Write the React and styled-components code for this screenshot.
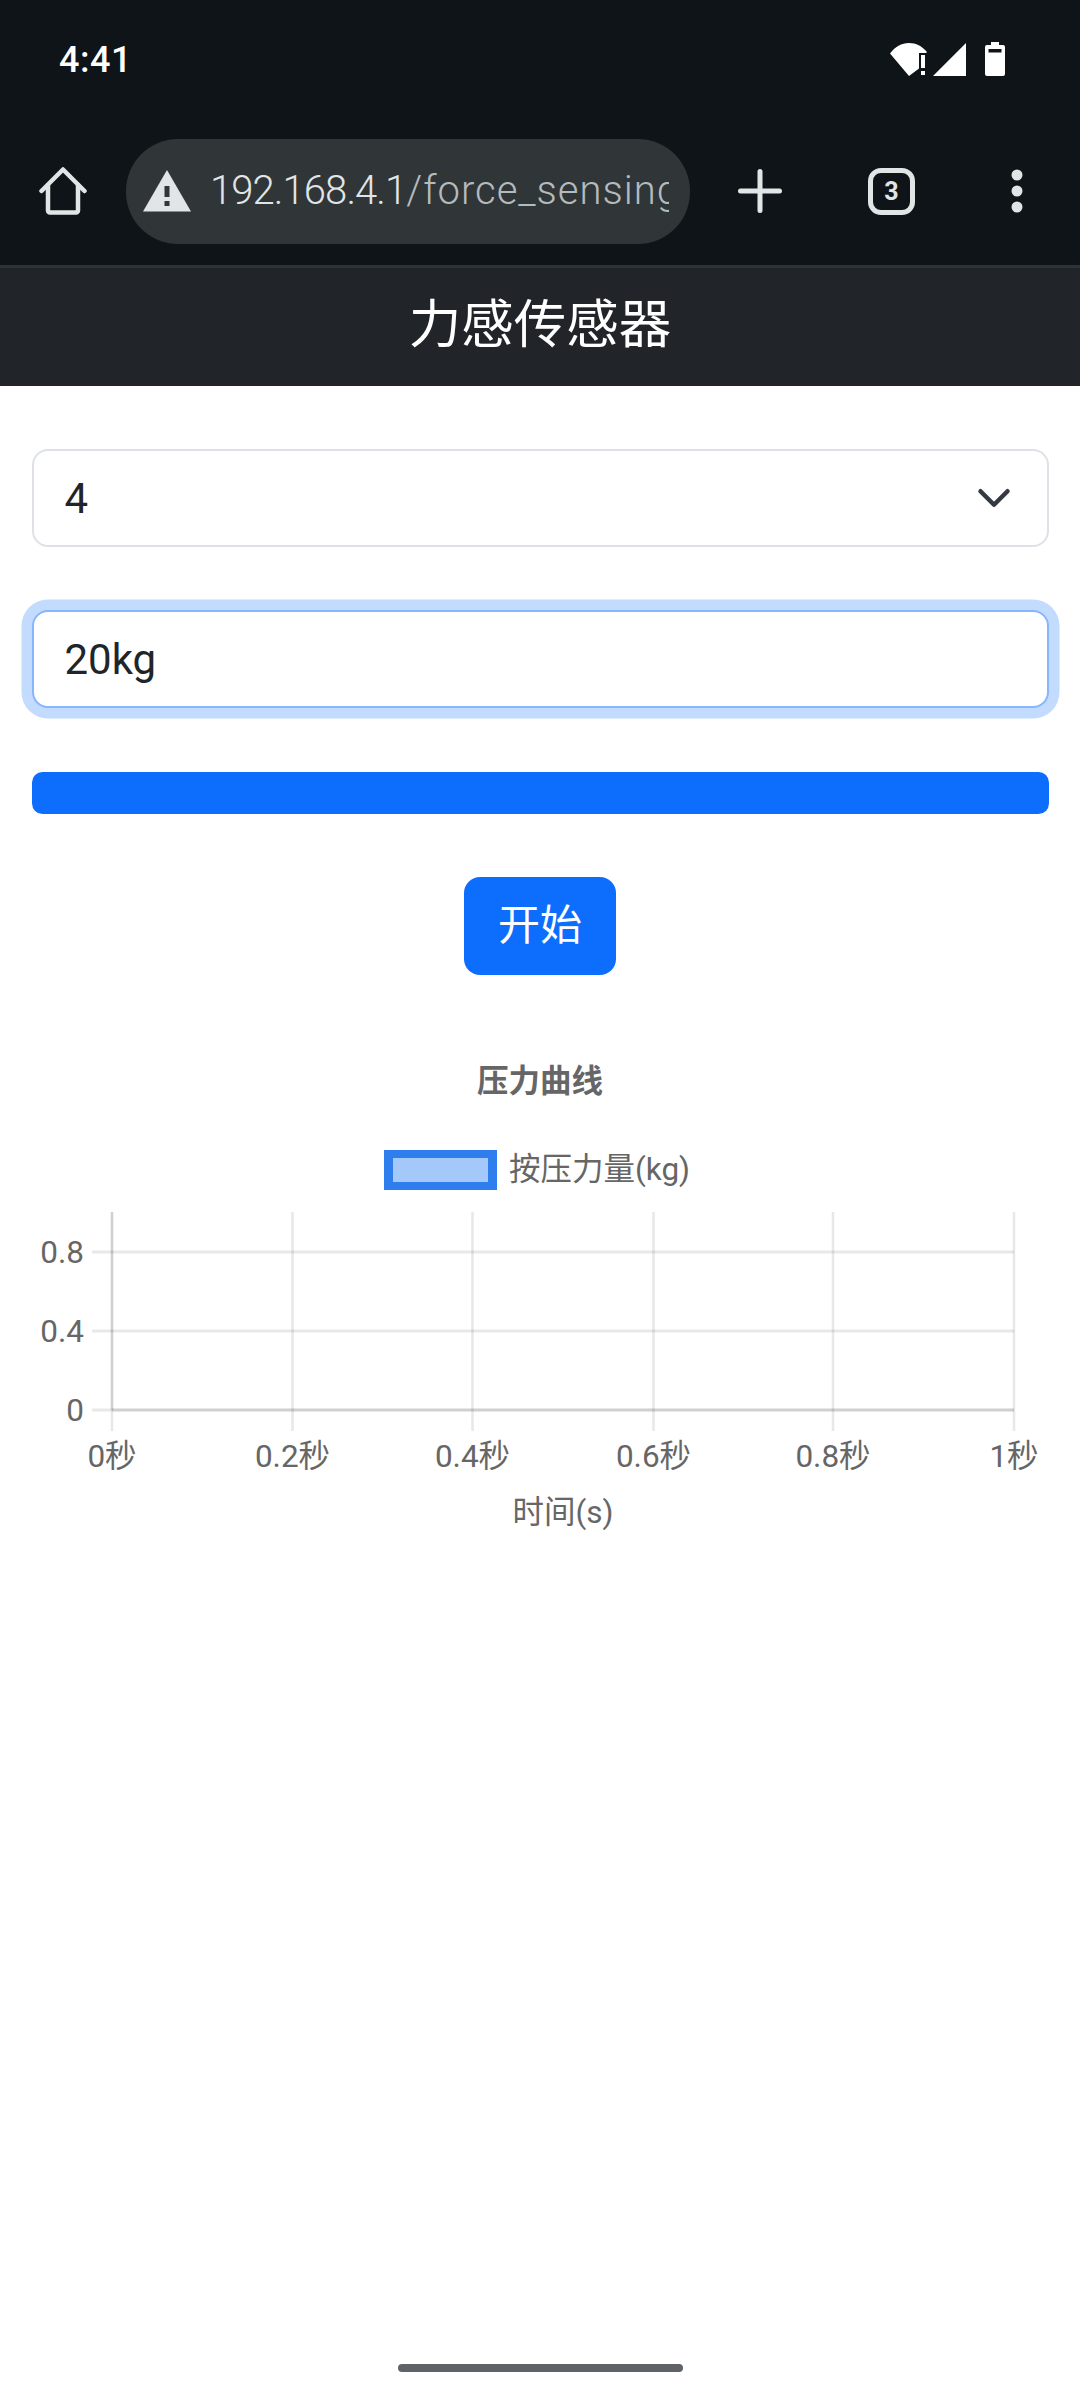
import React from "react";
import styled, { createGlobalStyle } from "styled-components";

const GlobalStyle = createGlobalStyle`
  html, body {
    margin: 0;
    padding: 0;
    background: #fff;
  }
  * {
    box-sizing: border-box;
  }
`;

const fontStack = `Roboto, "Noto Sans CJK SC", sans-serif`;

const Page = styled.div`
  width: 1080px;
  height: 2400px;
  display: flex;
  flex-direction: column;
  font-family: ${fontStack};
  overflow: hidden;
`;

const StatusBar = styled.div`
  height: 139px;
  padding: 0 75px 59px 59px;
  background: #0e1417;
  display: flex;
  align-items: flex-end;
  justify-content: space-between;
`;

const Time = styled.span`
  color: #fff;
  font-size: 36px;
  font-weight: 500;
  line-height: 40px;
  letter-spacing: 0.5px;
`;

const StatusIcons = styled.div`
  margin-bottom: 3px;
  display: flex;
  align-items: center;
  gap: 5px;
  height: 36px;
`;

const Toolbar = styled.div`
  height: 126px;
  padding-bottom: 22px;
  background: #0e1417;
  display: flex;
  align-items: center;
`;

const HomeSlot = styled.div`
  width: 126px;
  display: flex;
  justify-content: center;
`;

const UrlPill = styled.div`
  width: 564px;
  height: 105px;
  padding: 0 21px 0 17px;
  border-radius: 52px;
  background: #303538;
  display: flex;
  align-items: center;
  gap: 19px;
  overflow: hidden;
`;

const UrlText = styled.div`
  flex: 1;
  padding-bottom: 2px;
  overflow: hidden;
  white-space: nowrap;
  font-size: 40px;
  font-weight: 300;
  letter-spacing: 1px;
  color: #b4bbbd;
`;

const UrlHost = styled.span`
  color: #e1e5e6;
  letter-spacing: -0.9px;
`;

const ToolActions = styled.div`
  flex: 1;
  padding: 0 57px 0 48px;
  display: flex;
  align-items: center;
  justify-content: space-between;
`;

const TabCount = styled.div`
  width: 47px;
  height: 47px;
  margin-right: 10px;
  border: 5px solid #e1e5e6;
  border-radius: 13px;
  color: #e1e5e6;
  font-size: 25px;
  font-weight: 700;
  display: flex;
  align-items: center;
  justify-content: center;
`;

const NavBar = styled.header`
  height: 121px;
  padding-bottom: 14px;
  border-top: 3px solid #2e3337;
  background: #212529;
  color: #fff;
  font-size: 52.5px;
  display: flex;
  align-items: center;
  justify-content: center;
`;

const Form = styled.div`
  padding: 63px 31.5px 0;
  display: flex;
  flex-direction: column;
  gap: 63px;
`;

const SelectBox = styled.div`
  height: 98px;
  padding: 0 31px;
  border: 2.6px solid #dee2e6;
  border-radius: 16px;
  color: #212529;
  font-size: 42px;
  display: flex;
  align-items: center;
  justify-content: space-between;
`;

const ValueInput = styled.input`
  width: 100%;
  height: 98px;
  padding: 0 31px;
  border: 2.6px solid #86b7fe;
  border-radius: 16px;
  box-shadow: 0 0 0 10.5px rgba(13, 110, 253, 0.25);
  outline: none;
  color: #212529;
  font-family: ${fontStack};
  font-size: 42px;
`;

const ProgressBar = styled.div`
  height: 42px;
  margin-top: 1px;
  border-radius: 10.5px;
  background: #0d6efd;
`;

const ButtonRow = styled.div`
  display: flex;
  justify-content: center;
`;

const StartButton = styled.button`
  width: 152px;
  height: 98px;
  padding: 0 0 9px;
  border: 0;
  border-radius: 16px;
  background: #0d6efd;
  color: #fff;
  font-family: ${fontStack};
  font-size: 42px;
`;

const ChartTitle = styled.div`
  margin-top: 87px;
  color: #666;
  font-size: 31.5px;
  font-weight: 700;
  line-height: 40px;
  text-align: center;
`;

const Legend = styled.div`
  margin-top: 48px;
  padding-right: 6px;
  display: flex;
  justify-content: center;
  align-items: center;
  gap: 12px;
  color: #666;
  font-size: 31.5px;
  line-height: 40px;
`;

const LegendSwatch = styled.span`
  width: 113px;
  height: 40px;
  border-style: solid;
  border-color: #2f7eee;
  border-width: 8px 9px;
  background: #a5c8fb;
`;

const Plot = styled.svg`
  display: block;
  margin-top: 10px;
  font-family: ${fontStack};
  font-size: 31.5px;
  fill: #666;
`;

const HomeIndicator = styled.div`
  margin-top: auto;
  margin-bottom: 28px;
  align-self: center;
  width: 285px;
  height: 8px;
  border-radius: 4px;
  background: #5f6368;
`;

const xTicks = [
  { x: 112, label: "0秒" },
  { x: 292.5, label: "0.2秒" },
  { x: 472.5, label: "0.4秒" },
  { x: 653.5, label: "0.6秒" },
  { x: 833, label: "0.8秒" },
  { x: 1014, label: "1秒" },
];

const yTicks = [
  { y: 52, label: "0.8" },
  { y: 131, label: "0.4" },
  { y: 210, label: "0" },
];

const Chart = () => (
  <Plot width="1080" height="340" viewBox="0 0 1080 340">
    {xTicks.map((t) => (
      <line key={t.x} x1={t.x} x2={t.x} y1="12" y2="231" stroke="rgba(0,0,0,0.09)" strokeWidth="2.6" />
    ))}
    {yTicks.map((t) => (
      <line key={t.y} x1="92" x2="1014" y1={t.y} y2={t.y} stroke="rgba(0,0,0,0.09)" strokeWidth="3" />
    ))}
    <line x1="112" x2="112" y1="12" y2="210" stroke="rgba(0,0,0,0.1)" strokeWidth="2.6" />
    <line x1="112" x2="1014" y1="210" y2="210" stroke="rgba(0,0,0,0.1)" strokeWidth="3" />
    {yTicks.map((t) => (
      <text key={t.y} x="84" y={t.y + 11} textAnchor="end">{t.label}</text>
    ))}
    {xTicks.map((t) => (
      <text key={t.x} x={t.x} y="267" textAnchor="middle">{t.label}</text>
    ))}
    <text x="563" y="323" textAnchor="middle">时间(s)</text>
  </Plot>
);

const App = () => (
  <Page>
    <GlobalStyle />
    <StatusBar>
      <Time>4:41</Time>
      <StatusIcons>
        <svg width="38" height="33" viewBox="0 0 38 33">
          <path d="M0 10.500C5 4 11.500 0 19 0c7 0 13 3.200 18 9l-1 1h-7v15.500L19 33z" fill="#fff" />
          <rect x="31" y="12" width="4" height="13" fill="#fff" />
          <rect x="31" y="28" width="4" height="4" fill="#fff" />
        </svg>
        <svg width="33" height="33" viewBox="0 0 33 33">
          <path d="M33 0v33H0z" fill="#fff" />
        </svg>
        <svg width="20" height="34" viewBox="0 0 20 34" style={{ marginLeft: 14 }}>
          <path d="M6 0h8v3h4a2 2 0 0 1 2 2v27a2 2 0 0 1-2 2H2a2 2 0 0 1-2-2V5a2 2 0 0 1 2-2h4z" fill="#fff" />
          <rect x="3.500" y="7" width="13" height="3.500" fill="#0e1417" />
        </svg>
      </StatusIcons>
    </StatusBar>

    <Toolbar>
      <HomeSlot>
        <svg width="48" height="48" viewBox="0 0 48 48" fill="none" stroke="#e1e5e6" strokeWidth="4.500" strokeLinecap="round" strokeLinejoin="round">
          <path d="M2.500 24 24 2.500 45.500 24" />
          <path d="M9 18v25.500a2 2 0 0 0 2 2h26a2 2 0 0 0 2-2V18" />
        </svg>
      </HomeSlot>
      <UrlPill>
        <svg width="48" height="42" viewBox="0 0 48 42">
          <path d="M24 0l24 41.500H0z" fill="#e1e5e6" />
          <rect x="21.500" y="16" width="5" height="11" fill="#303538" />
          <rect x="21.500" y="31" width="5" height="5" fill="#303538" />
        </svg>
        <UrlText><UrlHost>192.168.4.1</UrlHost>/force_sensing</UrlText>
      </UrlPill>
      <ToolActions>
        <svg width="44" height="44" viewBox="0 0 44 44" stroke="#e1e5e6" strokeWidth="5" strokeLinecap="round">
          <path d="M22 2.500v39M2.500 22h39" />
        </svg>
        <TabCount>3</TabCount>
        <svg width="12" height="44" viewBox="0 0 12 44" fill="#e1e5e6">
          <circle cx="6" cy="6" r="5.500" />
          <circle cx="6" cy="22" r="5.500" />
          <circle cx="6" cy="38" r="5.500" />
        </svg>
      </ToolActions>
    </Toolbar>

    <NavBar>力感传感器</NavBar>

    <Form>
      <SelectBox>
        4
        <svg width="36" height="36" viewBox="0 0 16 16" fill="none" stroke="#343a40" strokeWidth="2" strokeLinecap="round" strokeLinejoin="round" style={{ marginRight: 4 }}>
          <path d="m2 5 6 6 6-6" />
        </svg>
      </SelectBox>
      <ValueInput readOnly value="20kg" />
      <ProgressBar />
      <ButtonRow>
        <StartButton>开始</StartButton>
      </ButtonRow>
    </Form>

    <ChartTitle>压力曲线</ChartTitle>
    <Legend>
      <LegendSwatch />
      按压力量(kg)
    </Legend>
    <Plot as={Chart} />

    <HomeIndicator />
  </Page>
);

export default App;
